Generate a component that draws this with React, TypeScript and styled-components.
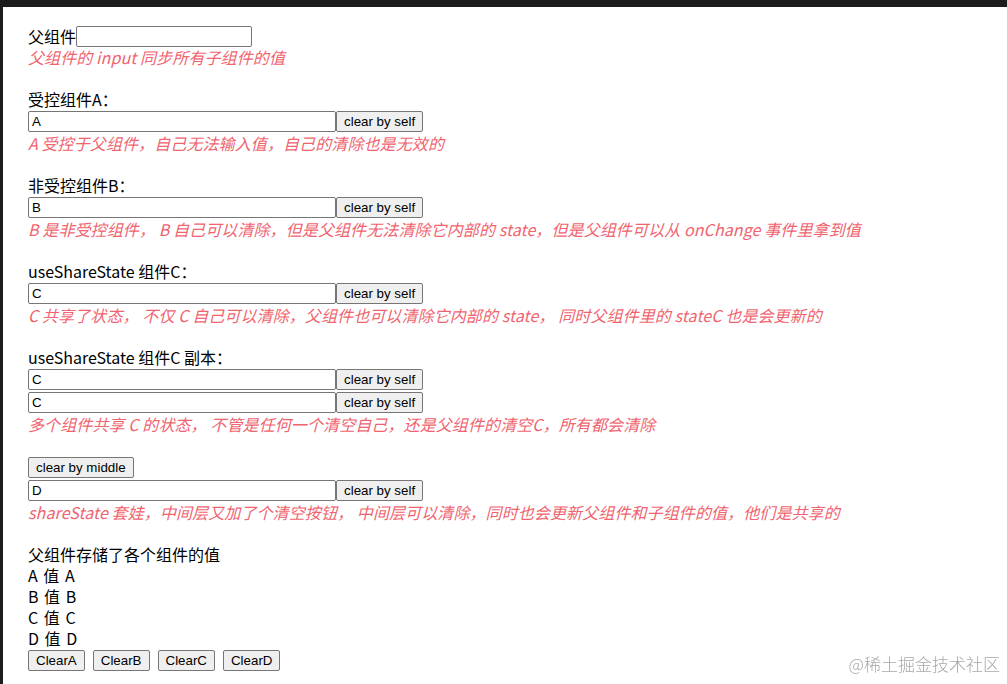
import { useState } from "react";
import styled, { createGlobalStyle } from "styled-components";

const GlobalStyle = createGlobalStyle`
	html, body {
		margin: 0;
		padding: 0;
		background: #ffffff;
	}
	body {
		font-family: "Noto Sans CJK SC", "Noto Sans", sans-serif;
		font-size: 16px;
		color: #000;
	}
`;

const Frame = styled.div`
	min-height: 684px;
	display: flex;
	flex-direction: column;
`;

const TopBar = styled.div`
	height: 7px;
	background: #1c1c1c;
	flex-shrink: 0;
`;

const Body = styled.div`
	flex: 1;
	display: flex;
`;

const SideStrip = styled.div`
	width: 3px;
	background: #1e1e1e;
	flex-shrink: 0;
`;

const Main = styled.main`
	flex: 1;
	padding: 18px 0 0 25px;
	display: flex;
	flex-direction: column;
	gap: 21px;
`;

const Section = styled.section`
	display: flex;
	flex-direction: column;
`;

const Line = styled.div`
	height: 21px;
	line-height: 21px;
	white-space: nowrap;
`;

const ValueLine = styled(Line)`
	word-spacing: 2px;
`;

const HeadRow = styled.div`
	height: 22px;
	display: flex;
	align-items: center;
	line-height: 21px;
`;

const Row = styled.div`
	height: 23px;
	display: flex;
	align-items: center;
`;

const Note = styled.div`
	height: 21px;
	line-height: 21px;
	color: #f0646f;
	font-style: italic;
	white-space: nowrap;
	letter-spacing: 0.1px;
`;

const TextInput = styled.input<{ $w: number }>`
	box-sizing: border-box;
	width: ${(p) => p.$w}px;
	height: 21px;
	margin: 0;
	padding: 1px 3px;
	border: 1px solid #767676;
	border-radius: 2px;
	font-family: "Liberation Sans", Arial, sans-serif;
	font-size: 13.33px;
	color: #000;
	background: #fff;
	outline: none;
`;

const Button = styled.button`
	box-sizing: border-box;
	height: 21px;
	margin: 0;
	padding: 1px 7px;
	border: 1px solid #767676;
	border-radius: 2px;
	background: #efefef;
	font-family: "Liberation Sans", Arial, sans-serif;
	font-size: 13.33px;
	color: #000;
	white-space: nowrap;
	cursor: default;
`;

const ButtonBar = styled.div`
	height: 23px;
	display: flex;
	align-items: center;
	gap: 8px;
`;

const Watermark = styled.div`
	position: fixed;
	right: 7px;
	bottom: 8px;
	font-family: "Noto Sans CJK SC", sans-serif;
	font-size: 17px;
	font-weight: 300;
	color: #a8a8a8;
	pointer-events: none;
`;

type FieldProps = {
	value: string;
	onChange?: (v: string) => void;
	onClear: () => void;
};

function Field({ value, onChange, onClear }: FieldProps) {
	return (
		<Row>
			<TextInput
				$w={308}
				value={value}
				onChange={(e) => onChange && onChange(e.target.value)}
			/>
			<Button onClick={onClear}>clear by self</Button>
		</Row>
	);
}

export default function App() {
	const [parent, setParent] = useState("");
	const [a, setA] = useState("A");
	const [b, setB] = useState("B");
	const [c, setC] = useState("C");
	const [d, setD] = useState("D");

	return (
		<Frame>
			<GlobalStyle />
			<TopBar />
			<Body>
				<SideStrip />
				<Main>
					<Section>
						<HeadRow>
							父组件
							<TextInput $w={176} value={parent} onChange={(e) => setParent(e.target.value)} />
						</HeadRow>
						<Note>父组件的 input 同步所有子组件的值</Note>
					</Section>

					<Section>
						<Line>受控组件A：</Line>
						<Field value={a} onClear={() => {}} />
						<Note>A 受控于父组件，自己无法输入值，自己的清除也是无效的</Note>
					</Section>

					<Section>
						<Line>非受控组件B：</Line>
						<Field value={b} onChange={setB} onClear={() => setB("")} />
						<Note>B 是非受控组件， B 自己可以清除，但是父组件无法清除它内部的 state，但是父组件可以从 onChange 事件里拿到值</Note>
					</Section>

					<Section>
						<Line>useShareState 组件C：</Line>
						<Field value={c} onChange={setC} onClear={() => setC("")} />
						<Note>C 共享了状态， 不仅 C 自己可以清除，父组件也可以清除它内部的 state， 同时父组件里的 stateC 也是会更新的</Note>
					</Section>

					<Section>
						<Line>useShareState 组件C 副本：</Line>
						<Field value={c} onChange={setC} onClear={() => setC("")} />
						<Field value={c} onChange={setC} onClear={() => setC("")} />
						<Note>多个组件共享 C 的状态， 不管是任何一个清空自己，还是父组件的清空C，所有都会清除</Note>
					</Section>

					<Section>
						<Row>
							<Button onClick={() => setD("")}>clear by middle</Button>
						</Row>
						<Field value={d} onChange={setD} onClear={() => setD("")} />
						<Note>shareState 套娃，中间层又加了个清空按钮， 中间层可以清除，同时也会更新父组件和子组件的值，他们是共享的</Note>
					</Section>

					<Section>
						<Line>父组件存储了各个组件的值</Line>
						<ValueLine>A 值 {a}</ValueLine>
						<ValueLine>B 值 {b}</ValueLine>
						<ValueLine>C 值 {c}</ValueLine>
						<ValueLine>D 值 {d}</ValueLine>
						<ButtonBar>
							<Button onClick={() => setA("")}>ClearA</Button>
							<Button onClick={() => setB("")}>ClearB</Button>
							<Button onClick={() => setC("")}>ClearC</Button>
							<Button onClick={() => setD("")}>ClearD</Button>
						</ButtonBar>
					</Section>
				</Main>
			</Body>
			<Watermark>@稀土掘金技术社区</Watermark>
		</Frame>
	);
}
